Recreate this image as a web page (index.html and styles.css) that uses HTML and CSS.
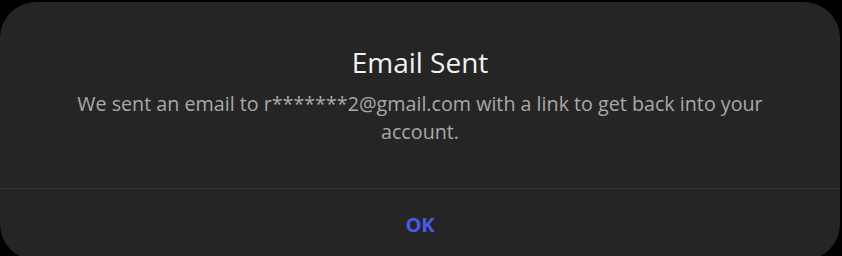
FILE: index.html
```html
<!DOCTYPE html>
<html lang="en">
<head>
<meta charset="utf-8">
<title>Email Sent</title>
<link rel="stylesheet" href="styles.css">
</head>
<body>
<div class="dialog">
  <div class="dialog-body">
    <h1 class="dialog-title">Email Sent</h1>
    <p class="dialog-text">We sent an email to r*******2@gmail.com with a link to get back into your account.</p>
  </div>
  <div class="dialog-actions">
    <button class="dialog-btn" type="button">OK</button>
  </div>
</div>
</body>
</html>
```

FILE: styles.css
```css
html, body {
  margin: 0;
  padding: 0;
  background: #000;
  height: 256px;
  overflow: hidden;
}

body {
  padding-top: 2px;
  font-family: "Open Sans", "Noto Sans", sans-serif;
}

.dialog {
  width: 840px;
  height: 258px;
  background: #252525;
  border-radius: 36px;
  display: flex;
  flex-direction: column;
  box-sizing: border-box;
}

.dialog-body {
  padding: 42px 50px 0;
  height: 187px;
  box-sizing: border-box;
  border-bottom: 1px solid #363636;
  text-align: center;
}

.dialog-title {
  margin: 0;
  font-size: 28px;
  font-weight: 400;
  line-height: 36px;
  color: #f2f2f2;
}

.dialog-text {
  margin: 10px 0 0;
  font-size: 19.7px;
  line-height: 28px;
  color: #a9a9a9;
}

.dialog-actions {
  display: flex;
  justify-content: center;
  padding-top: 21px;
}

.dialog-btn {
  background: none;
  border: 0;
  padding: 0;
  font-family: "Open Sans", "Noto Sans", sans-serif;
  font-size: 20px;
  font-weight: 700;
  line-height: 30px;
  color: #4a5af0;
  cursor: pointer;
}
```
